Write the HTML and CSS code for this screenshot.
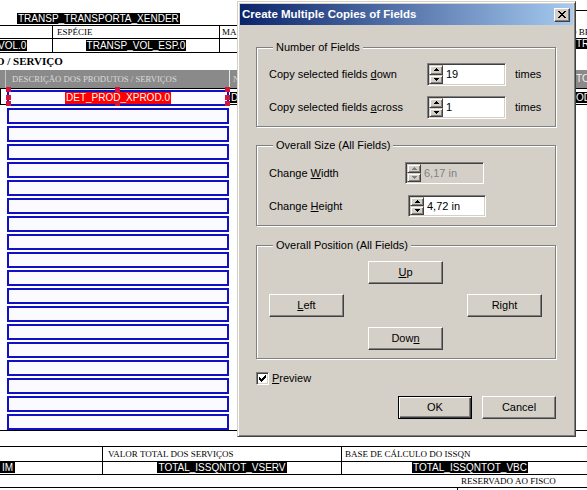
FILE: index.html
```html
<!DOCTYPE html>
<html lang="pt">
<head>
<meta charset="utf-8">
<title>Create Multiple Copies of Fields</title>
<link rel="stylesheet" href="styles.css">
</head>
<body>
<div class="doc">
  <div class="top">
    <div class="top-main">
      <div class="row-a"><span class="fld">TRANSP_TRANSPORTA_XENDER</span></div>
      <div class="row-b tri">
        <div class="cell"></div>
        <div class="cell cell-pad4"><span class="lbl">ESPÉCIE</span></div>
        <div class="cell cell-pad2"><span class="lbl">MA</span></div>
      </div>
      <div class="row-c tri">
        <div class="cell"><span class="fld fld-cut">VOL.0</span></div>
        <div class="cell cell-center"><span class="fld">TRANSP_VOL_ESP.0</span></div>
        <div class="cell"></div>
      </div>
    </div>
    <div class="top-side">
      <div class="side-line"></div>
      <span class="side-lbl lbl">O BRUTO</span>
      <span class="fld">TRANSP_PESO_B</span>
    </div>
  </div>
  <div class="sec-title">O / SERVIÇO</div>
  <div class="hdr">
    <div class="hdr-edge"></div>
    <div class="hdr-cell hdr-desc">DESCRIÇÃO DOS PRODUTOS / SERVIÇOS</div>
    <div class="hdr-cell hdr-mid">NCM</div>
    <div class="hdr-cell hdr-tot">TOTAL</div>
  </div>
  <div class="items">
    <div class="band">
      <div></div>
      <div><span class="fld">DET</span></div>
      <div><span class="fld">OD_VPROD.0</span></div>
    </div>
    <div class="boxes">
      <div class="box sel">
        <span class="sel-fld">DET_PROD_XPROD.0</span>
        <span class="h h-tl"></span><span class="h h-tc"></span><span class="h h-tr"></span>
        <span class="h h-ml"></span><span class="h h-mr"></span>
        <span class="h h-bl"></span><span class="h h-bc"></span><span class="h h-br"></span>
      </div>
      <div class="box"></div><div class="box"></div><div class="box"></div>
      <div class="box"></div><div class="box"></div><div class="box"></div>
      <div class="box"></div><div class="box"></div><div class="box"></div>
      <div class="box"></div><div class="box"></div><div class="box"></div>
      <div class="box"></div><div class="box"></div><div class="box"></div>
      <div class="box"></div><div class="box"></div><div class="box"></div>
    </div>
  </div>
  <div class="row-g"></div>
  <div class="row-h quad">
    <div></div>
    <div class="pad5"><span class="lbl">VALOR TOTAL DOS SERVIÇOS</span></div>
    <div class="pad3"><span class="lbl">BASE DE CÁLCULO DO ISSQN</span></div>
  </div>
  <div class="row-i quad">
    <div class="left"><span class="fld fld-im">IM</span></div>
    <div><span class="fld">TOTAL_ISSQNTOT_VSERV</span></div>
    <div><span class="fld">TOTAL_ISSQNTOT_VBC</span></div>
  </div>
  <div class="row-j"><span class="lbl">RESERVADO AO FISCO</span></div>
  <div class="row-k"><div></div><div></div></div>
</div>

<div class="dlg">
  <div class="title">
    <span class="title-text">Create Multiple Copies of Fields</span>
    <span class="close"><svg width="8" height="7" viewBox="0 0 8 7"><path d="M0 0h2v1H0zM6 0h2v1H6zM1 1h2v1H1zM5 1h2v1H5zM2 2h4v1H2zM3 3h2v1H3zM2 4h4v1H2zM1 5h2v1H1zM5 5h2v1H5zM0 6h2v1H0zM6 6h2v1H6z" fill="#000"/></svg></span>
  </div>
  <div class="dbody">
    <div class="grp g1">
      <span class="legend">Number of Fields</span>
      <div class="frow">
        <span class="flabel">Copy selected fields <u>d</u>own</span>
        <div class="spin">
          <div class="sbtns">
            <span class="sb sb-up"><svg width="5" height="3" viewBox="0 0 5 3"><path d="M2 0h1v1h1v1h1v1H0V2h1V1h1z"/></svg></span>
            <span class="sb sb-dn"><svg width="5" height="3" viewBox="0 0 5 3"><path d="M0 0h5v1H4v1H3v1H2V2H1V1H0z"/></svg></span>
          </div>
          <span class="sval">19</span>
        </div>
        <span class="unit">times</span>
      </div>
      <div class="frow">
        <span class="flabel">Copy selected fields <u>a</u>cross</span>
        <div class="spin">
          <div class="sbtns">
            <span class="sb sb-up"><svg width="5" height="3" viewBox="0 0 5 3"><path d="M2 0h1v1h1v1h1v1H0V2h1V1h1z"/></svg></span>
            <span class="sb sb-dn"><svg width="5" height="3" viewBox="0 0 5 3"><path d="M0 0h5v1H4v1H3v1H2V2H1V1H0z"/></svg></span>
          </div>
          <span class="sval">1</span>
        </div>
        <span class="unit">times</span>
      </div>
    </div>

    <div class="grp g2">
      <span class="legend">Overall Size (All Fields)</span>
      <div class="frow frow-s">
        <span class="flabel flabel-s">Change <u>W</u>idth</span>
        <div class="spin spin-s disabled">
          <div class="sbtns">
            <span class="sb sb-up"><svg width="5" height="3" viewBox="0 0 5 3"><path d="M2 0h1v1h1v1h1v1H0V2h1V1h1z"/></svg></span>
            <span class="sb sb-dn"><svg width="5" height="3" viewBox="0 0 5 3"><path d="M0 0h5v1H4v1H3v1H2V2H1V1H0z"/></svg></span>
          </div>
          <span class="sval">6,17 in</span>
        </div>
      </div>
      <div class="frow frow-s">
        <span class="flabel flabel-s">Change <u>H</u>eight</span>
        <div class="spin spin-s spin-h">
          <div class="sbtns">
            <span class="sb sb-up"><svg width="5" height="3" viewBox="0 0 5 3"><path d="M2 0h1v1h1v1h1v1H0V2h1V1h1z"/></svg></span>
            <span class="sb sb-dn"><svg width="5" height="3" viewBox="0 0 5 3"><path d="M0 0h5v1H4v1H3v1H2V2H1V1H0z"/></svg></span>
          </div>
          <span class="sval">4,72 in</span>
        </div>
      </div>
    </div>

    <div class="grp g3">
      <span class="legend">Overall Position (All Fields)</span>
      <div class="pos">
        <span class="btn p-up"><u>U</u>p</span>
        <span class="btn p-left"><u>L</u>eft</span>
        <span class="btn p-right">Ri<u>g</u>ht</span>
        <span class="btn p-down">Dow<u>n</u></span>
      </div>
    </div>

    <div class="chkrow">
      <span class="chk"><svg width="7" height="7" viewBox="0 0 7 7"><path d="M6 0h1v1H6zM5 1h2v1H5zM0 2h1v1H0zM4 2h3v1H4zM0 3h2v1H0zM3 3h3v1H3zM0 4h5v1H0zM1 5h3v1H1zM2 6h1v1H2z" fill="#000"/></svg></span>
      <span class="chk-label"><u>P</u>review</span>
    </div>

    <div class="brow">
      <span class="btn btn-def">OK</span>
      <span class="btn btn-w74">Cancel</span>
    </div>
  </div>
</div>
</body>
</html>
```

FILE: styles.css
```css
* { box-sizing: border-box; }
html, body { margin: 0; padding: 0; }
body {
  width: 587px;
  height: 490px;
  overflow: hidden;
  position: relative;
  background: #fff;
  color: #000;
  font-family: "Liberation Sans", Arial, sans-serif;
}

/* ---------- background document ---------- */
.doc { width: 600px; font-size: 9px; line-height: 12px; }

.fld {
  display: block;
  width: max-content;
  height: 11px;
  line-height: 11px;
  font-size: 10px;
  font-family: "Liberation Sans", Arial, sans-serif;
  background: #000;
  color: #fff;
  padding: 0 1px;
  white-space: nowrap;
}
.lbl {
  display: block;
  width: max-content;
  font-family: "Liberation Serif", "Times New Roman", serif;
  font-size: 9px;
  line-height: 12px;
  white-space: nowrap;
  color: #000;
}

.top { display: grid; grid-template-columns: 575px 25px; }
.row-a {
  height: 26px;
  border-bottom: 1px solid #000;
  padding: 13px 0 0 17px;
  display: flex;
  align-items: flex-start;
}
.tri { display: grid; grid-template-columns: 53px 167px 1fr; }
.tri .cell { border-right: 1px solid #000; overflow: hidden; white-space: nowrap; }
.tri .cell:last-child { border-right: 0; }
.cell-pad4 { padding-left: 4px; }
.cell-pad2 { padding-left: 2px; }
.row-b { height: 13px; border-bottom: 1px solid #000; }
.row-c { height: 14px; border-bottom: 1px solid #000; }
.row-c .fld { margin-top: 1px; }
.cell-center { display: flex; justify-content: center; align-items: flex-start; }
.fld-cut { margin-left: -3px; }

.top-side { overflow: hidden; height: 53px; }
.side-line { height: 11px; border-bottom: 1px solid #000; }
.side-lbl { margin: 15px 0 0 -5px; }

.sec-title {
  height: 17px;
  font: bold 11px/17px "Liberation Serif", "Times New Roman", serif;
  text-indent: -4px;
  white-space: nowrap;
}

.hdr {
  height: 18px;
  background: #8a8a8a;
  display: grid;
  grid-template-columns: 6px 224px 345px 1fr;
}
.hdr-edge { border-right: 1px solid #c4c4c4; }
.hdr-cell {
  font-family: "Liberation Serif", "Times New Roman", serif;
  font-size: 8.7px;
  line-height: 18px;
  color: #dcdcdc;
  white-space: nowrap;
  overflow: hidden;
}
.hdr-desc { padding-left: 6px; border-right: 1px solid #e8e8e8; }
.hdr-mid { padding-left: 3px; }
.hdr-tot {
  padding-left: 1px;
  font-family: "Liberation Sans", Arial, sans-serif;
  font-size: 10px;
  color: #f4f4f4;
}

.items {
  display: grid;
  height: 343px;
  border-bottom: 1px solid #000;
}
.items > * { grid-area: 1 / 1; align-self: start; }
.band {
  height: 17px;
  border-top: 1px solid #000;
  border-bottom: 1px solid #000;
  border-left: 1px solid #000;
  display: grid;
  grid-template-columns: 229px 345px 1fr;
  padding-top: 3px;
  align-items: start;
  overflow: hidden;
}
.boxes {
  padding: 2px 0 0 7px;
  display: flex;
  flex-direction: column;
  gap: 2px;
}
.box {
  width: 222px;
  height: 16px;
  border: 2px solid #1010c4;
  background: #fbfbff;
}
.box.sel {
  position: relative;
  display: flex;
  justify-content: center;
  align-items: center;
}
.sel-fld {
  background: #f00;
  color: #fff;
  font-size: 10px;
  line-height: 12px;
  height: 12px;
  padding: 0 1px;
  white-space: nowrap;
}
.h { position: absolute; width: 5px; height: 5px; background: #d4143c; }
.h-tl { left: -3px; top: -5px; }
.h-tc { left: 106px; top: -5px; }
.h-tr { left: 216px; top: -5px; }
.h-ml { left: -3px; top: 3px; }
.h-mr { left: 216px; top: 3px; }
.h-bl { left: -3px; top: 9px; }
.h-bc { left: 106px; top: 9px; }
.h-br { left: 216px; top: 9px; }

.row-g { height: 16px; border-bottom: 1px solid #000; }
.quad { display: grid; grid-template-columns: 103px 239px 256px; }
.quad > div { border-right: 1px solid #000; overflow: hidden; white-space: nowrap; }
.quad > div:last-child { border-right: 0; }
.row-h { height: 15px; border-bottom: 1px solid #000; }
.row-h .lbl { line-height: 14px; }
.pad5 { padding-left: 5px; }
.pad3 { padding-left: 3px; }
.row-i { height: 13px; border-bottom: 1px solid #000; }
.row-i > div { display: flex; justify-content: center; align-items: flex-start; }
.row-i > div.left { justify-content: flex-start; }
.fld-im { padding: 0 2px; }
.row-j { height: 13px; border-bottom: 1px solid #000; padding-left: 461px; }
.row-k { height: 10px; display: grid; grid-template-columns: 458px 1fr; }
.row-k > div:first-child { border-right: 1px solid #000; }

/* ---------- dialog ---------- */
.dlg {
  position: absolute;
  left: 237px;
  top: 1px;
  width: 339px;
  height: 436px;
  background: #d4d0c8;
  border: 1px solid;
  border-color: #d4d0c8 #404040 #404040 #d4d0c8;
  box-shadow: inset 1px 1px #fff, inset -1px -1px #808080;
  font: 11px/13px "Liberation Sans", Arial, sans-serif;
  color: #000;
  z-index: 2;
}
.title {
  height: 21px;
  margin: 2px 2px 0;
  padding-left: 2px;
  background: linear-gradient(to right, #0a246a, #a6caf0);
  display: flex;
  align-items: center;
}
.title-text {
  color: #fff;
  font-weight: bold;
  font-size: 11.5px;
  white-space: nowrap;
}
.close {
  margin-left: auto;
  margin-right: 3px;
  width: 16px;
  height: 14px;
  background: #d4d0c8;
  border: 1px solid;
  border-color: #fff #404040 #404040 #fff;
  box-shadow: inset -1px -1px #808080;
  display: flex;
  align-items: center;
  justify-content: center;
  padding-right: 1px;
}
.close svg { display: block; }

.dbody { padding: 0 19px 0 18px; }

.grp {
  position: relative;
  border: 1px solid #808080;
  box-shadow: 1px 1px 0 #fff, inset 1px 1px 0 #fff;
}
.legend {
  position: absolute;
  top: -7px;
  left: 16px;
  padding: 0 3px;
  background: #d4d0c8;
  line-height: 13px;
  white-space: nowrap;
}
.g1 { margin-top: 22px; height: 80px; padding: 15px 0 0 12px; }
.g2 { margin-top: 18px; height: 81px; padding: 16px 0 0 12px; }
.g3 { margin-top: 19px; height: 114px; padding: 15px 0 0 12px; }

.frow { display: flex; align-items: center; height: 23px; }
.frow + .frow { margin-top: 10px; }
.frow-s { height: 22px; }
.frow-s + .frow-s { margin-top: 11px; }
.flabel { width: 158px; white-space: nowrap; }
.flabel-s { width: 136px; }
.unit { margin-left: 9px; }

.spin {
  display: flex;
  width: 79px;
  height: 23px;
  background: #fff;
  border: 1px solid;
  border-color: #808080 #fff #fff #808080;
  box-shadow: inset 1px 1px #404040, inset -1px -1px #d4d0c8;
  padding: 1px;
}
.spin-s { height: 22px; }
.spin-h { margin-left: 3px; width: 78px; }
.sbtns { width: 14px; display: flex; flex-direction: column; }
.sb {
  flex: 1;
  background: #d4d0c8;
  border: 1px solid;
  border-color: #d4d0c8 #404040 #404040 #d4d0c8;
  box-shadow: inset 1px 1px #fff, inset -1px -1px #808080;
  display: flex;
  align-items: center;
  justify-content: center;
}
.sb svg { display: block; fill: #000; }
.sval { flex: 1; display: flex; align-items: center; padding-left: 3px; white-space: nowrap; }
.spin.disabled { background: #d4d0c8; }
.spin.disabled .sval { color: #808080; }
.spin.disabled .sb svg { fill: #808080; }

.pos {
  display: grid;
  grid-template-columns: repeat(3, 75px);
  grid-template-rows: repeat(3, 23px);
  column-gap: 24px;
  row-gap: 10px;
}
.p-up { grid-column: 2; grid-row: 1; }
.p-left { grid-column: 1; grid-row: 2; }
.p-right { grid-column: 3; grid-row: 2; }
.p-down { grid-column: 2; grid-row: 3; }

.btn {
  width: 75px;
  height: 23px;
  background: #d4d0c8;
  border: 1px solid;
  border-color: #fff #404040 #404040 #fff;
  box-shadow: inset -1px -1px #808080;
  display: flex;
  align-items: center;
  justify-content: center;
  white-space: nowrap;
}
.btn-def {
  width: 74px;
  border-color: #000;
  box-shadow: inset 1px 1px #fff, inset -1px -1px #404040, inset -2px -2px #808080;
}
.btn-w74 { width: 74px; }

.chkrow { display: flex; align-items: center; height: 13px; margin-top: 13px; }
.chk {
  width: 13px;
  height: 13px;
  background: #fff;
  border: 1px solid;
  border-color: #808080 #fff #fff #808080;
  box-shadow: inset 1px 1px #404040, inset -1px -1px #d4d0c8;
  display: flex;
  align-items: center;
  justify-content: center;
}
.chk svg { display: block; }
.chk-label { margin-left: 3px; }

.brow { display: flex; justify-content: flex-end; gap: 10px; margin-top: 11px; }
```
